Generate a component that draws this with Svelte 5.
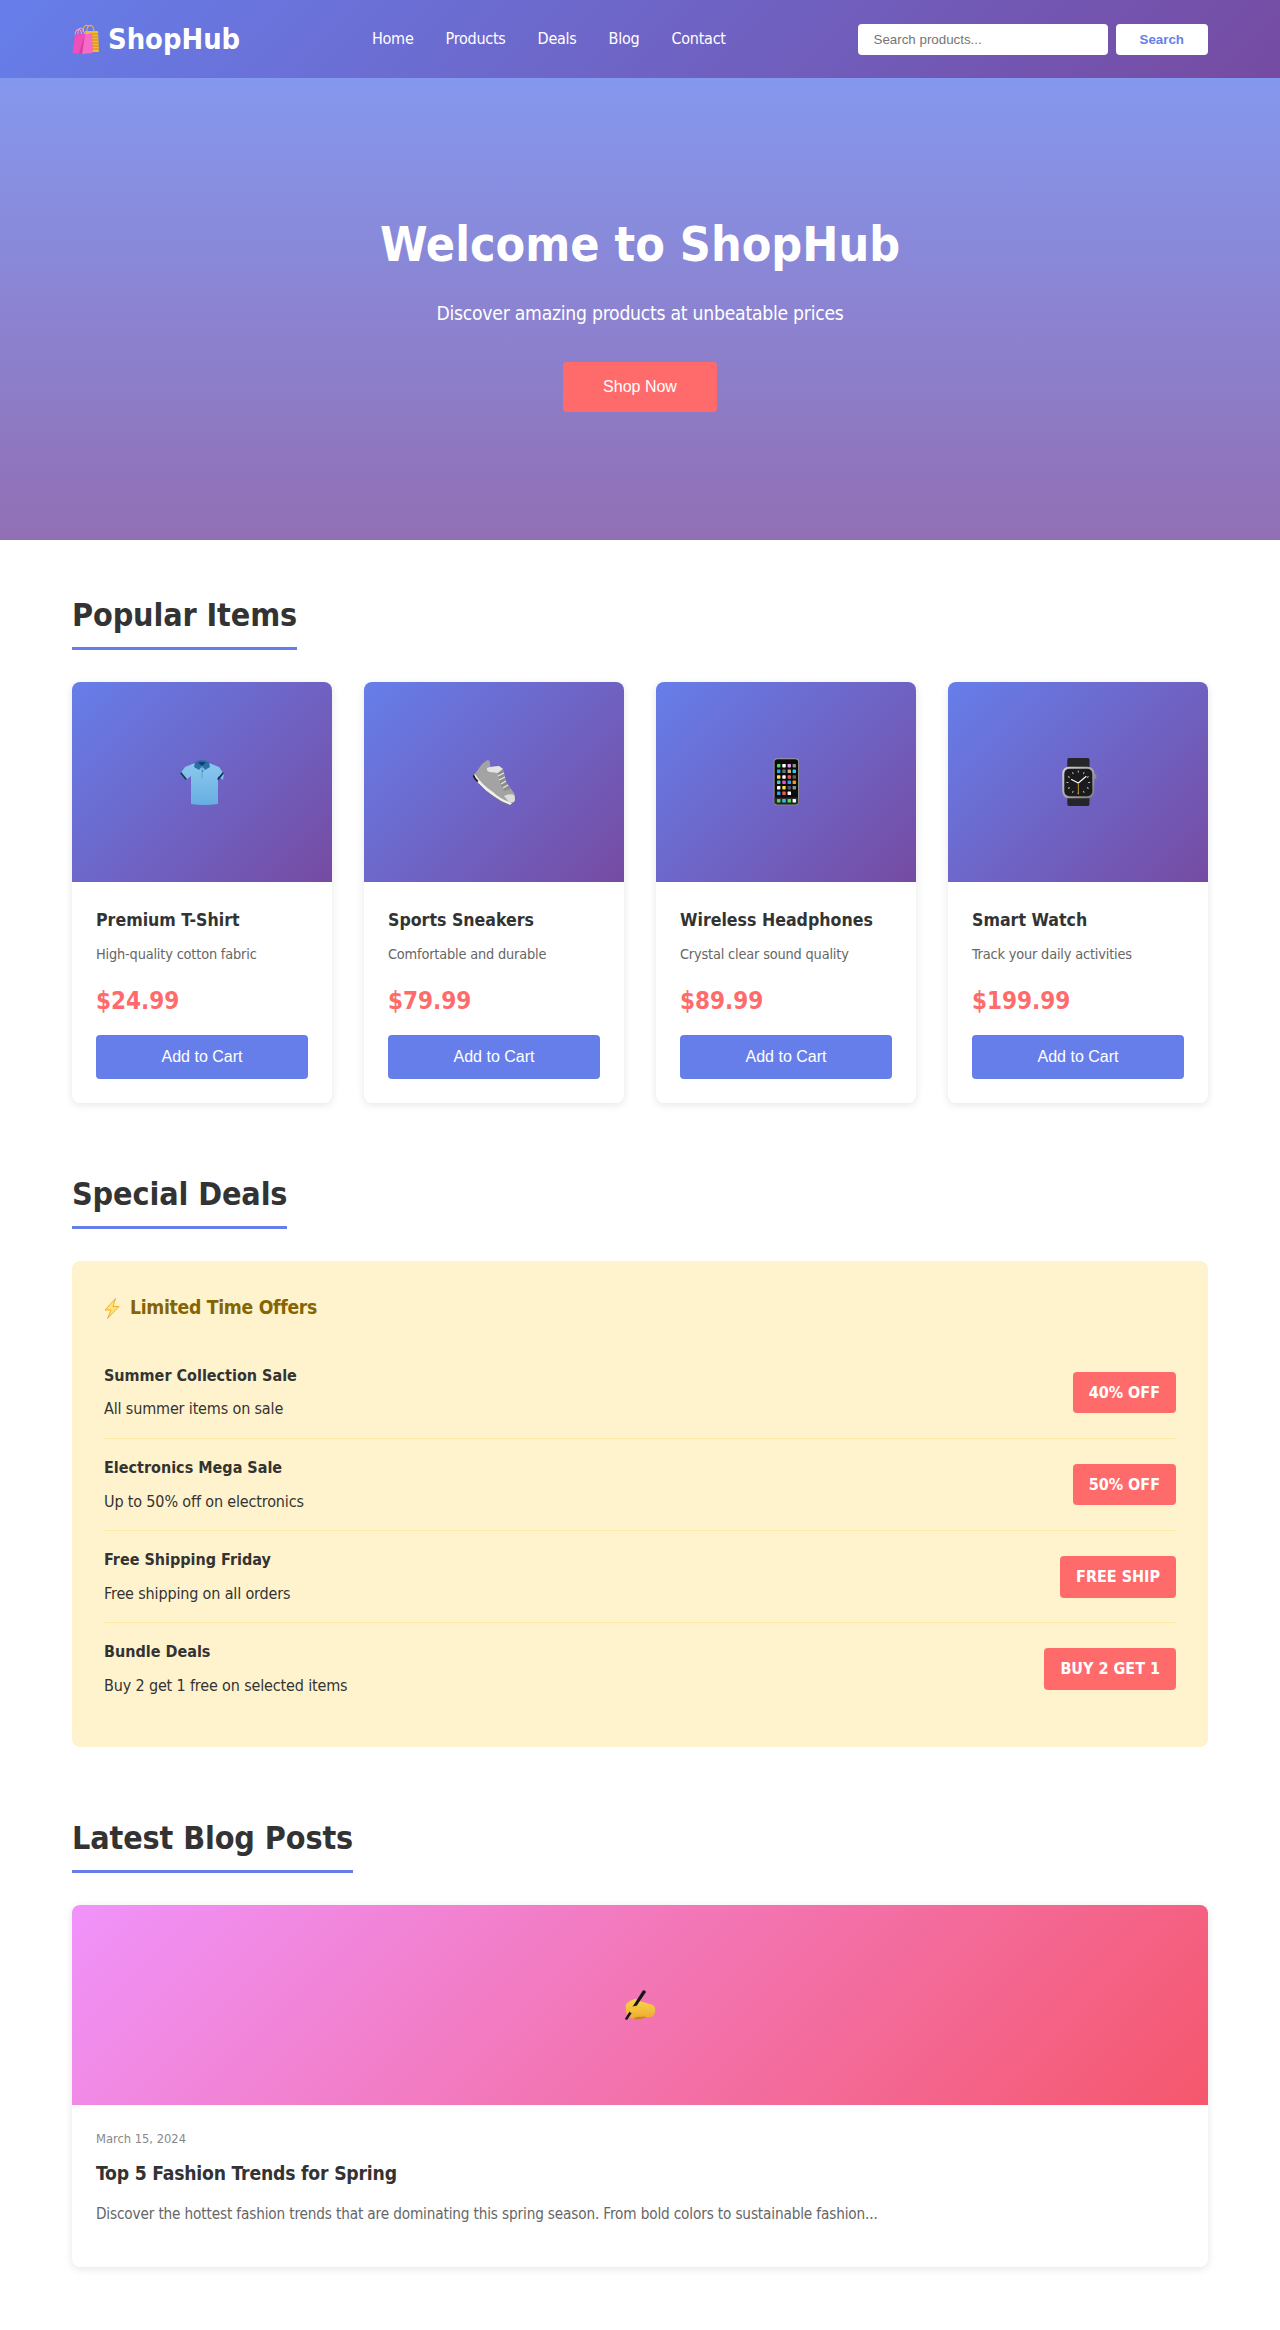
<script>
  const nav = ['Home', 'Products', 'Deals', 'Blog', 'Contact'];
  const products = [
    { icon: 'shirt', name: 'Premium T-Shirt', desc: 'High-quality cotton fabric', price: '$24.99' },
    { icon: 'shoe', name: 'Sports Sneakers', desc: 'Comfortable and durable', price: '$79.99' },
    { icon: 'phone', name: 'Wireless Headphones', desc: 'Crystal clear sound quality', price: '$89.99' },
    { icon: 'watch', name: 'Smart Watch', desc: 'Track your daily activities', price: '$199.99' }
  ];
  const deals = [
    { title: 'Summer Collection Sale', desc: 'All summer items on sale', badge: '40% OFF' },
    { title: 'Electronics Mega Sale', desc: 'Up to 50% off on electronics', badge: '50% OFF' },
    { title: 'Free Shipping Friday', desc: 'Free shipping on all orders', badge: 'FREE SHIP' },
    { title: 'Bundle Deals', desc: 'Buy 2 get 1 free on selected items', badge: 'BUY 2 GET 1' }
  ];
  const apps = [
    ['#4cd964', '#ffffff', '#e0a0e8', '#8e8e93'],
    ['#1ab2f0', '#6d6d72', '#c9b38c', '#35c8e8'],
    ['#ffe14d', '#ffffff', '#f0584f', '#5f5f63'],
    ['#35d0e0', '#e84fd0', '#1ea8f0', '#ff9500'],
    ['#ffffff', '#ffdc3c', '#55555a', '#8e8e93'],
    ['#1ea8f0', '#f0584f', '#ffffff', null]
  ];
  const dock = ['#4cd964', '#2fc4ee', '#4cd964', '#ffffff'];
  const colX = [16.7, 22, 27.3, 32.3];
  const rowY = [7.7, 13.3, 19, 24.3, 29.7, 35.3];
  const ticks = Array.from({ length: 12 }, (_, i) => i * 30);
</script>

<header class="header">
  <div class="header-inner">
    <div class="logo">
      <svg class="bag" viewBox="0 0 27 30" aria-hidden="true">
        <path d="M11 8 C11 1 15 0 17 3 M15 7 C15 0 21 -1 22 7" fill="none" stroke="#e0b04f" stroke-width="1.1"/>
        <path d="M6 10 C6 2 11 2 12.5 10 M3 11 C4 4 9 3 9.5 10" fill="none" stroke="#f2a0cc" stroke-width="1.1"/>
        <path d="M13 7 H26 L27 28 H17 Z" fill="#f0bb30"/>
        <path d="M17 10 H26 M17 13 H26 M17 16 H26.5 M17.5 19 H26.5 M18 22 H26.7 M18 25 H27" stroke="#c98a1e" stroke-width="1.1"/>
        <path d="M3 10 H20 L20.5 29 L10 30 L0.5 29 Z" fill="#ee4fb8"/>
        <path d="M13 10 L20 10 L20.5 29 L10 30 Z" fill="#f56cc8"/>
        <path d="M13 10 L10 30 L7 29 Z" fill="#d63ea6"/>
      </svg>
      <span>ShopHub</span>
    </div>
    <nav class="nav">
      {#each nav as item}
        <a href="#top">{item}</a>
      {/each}
    </nav>
    <div class="search">
      <input type="text" placeholder="Search products..." />
      <button>Search</button>
    </div>
  </div>
</header>

<section class="hero">
  <h1>Welcome to ShopHub</h1>
  <p>Discover amazing products at unbeatable prices</p>
  <button>Shop Now</button>
</section>

<main class="container">
  <section class="section">
    <h2>Popular Items</h2>
    <div class="grid">
      {#each products as p}
        <article class="card">
          <div class="thumb">
            <svg class="icon" viewBox="0 0 48 48" aria-hidden="true">
              {#if p.icon === 'shirt'}
                <defs>
                  <linearGradient id="polo" x1="0" y1="0" x2="0" y2="1">
                    <stop offset="0" stop-color="#8cc8ee"/>
                    <stop offset="1" stop-color="#66aee2"/>
                  </linearGradient>
                </defs>
                <path d="M17 5 L7 9 L2 16 L8 22 L13 18 L13 46 Q26 48 40 46 L40 18 L45 22 L46 16 L41 9 L31 5 L24 10 Z" fill="url(#polo)"/>
                <path d="M2 15.5 L7.5 22 L9 21 L3.2 14 Z M46 15.5 L40.5 22 L39 21 L44.8 14 Z" fill="#16355f"/>
                <path d="M17 4 Q24 0 31 4 L32 9 L27 12 L24 8 L21 12 L16 9 Z" fill="#2a6fa8"/>
                <path d="M20 4.5 Q24 3 28 4.5 L24 8 Z" fill="#123f70"/>
                <path d="M24 8 V20" stroke="#5d9fd0" stroke-width="1"/>
                <circle cx="24.7" cy="13" r="0.8" fill="#2a6fa8"/>
              {:else if p.icon === 'shoe'}
                <path d="M3 18 Q8 12 12 6 L18 1.5 Q21 4 20 9 L29 8 L33 11 L36 24 L44 35 Q46 40 44 44 L40 47 Q30 44 22 37 Q10 29 3 18 Z" fill="#a3a3a3"/>
                <path d="M20 9 L29 8 L33 11 L28 15 L20 14 Q16 13 17 10 Z" fill="#e4e4e4"/>
                <path d="M28 15 L33 11 L36 24 L41 31 L34 33 L30 25 Z" fill="#8d8d8d"/>
                <path d="M28 18 L34 15 M29 22 L35 19 M31 26 L36 23 M33 30 L38 27" stroke="#e8e8e8" stroke-width="1.3"/>
                <path d="M34 38 Q40 35 44 37 Q46 41 44 44 L39 44 Z" fill="#dcdcdc"/>
                <path d="M3 18 Q10 29 22 37 Q30 43 40 47 L42 45 Q30 41 23 34 Q11 26 5 16 Z" fill="#efefef"/>
                <path d="M2.7 18 Q4 21 7 24 L8.5 23 Q5 20 4 16.5 Z" fill="#161616"/>
                <path d="M9 26 Q16 34 24 39 Q32 45 40 47.3" fill="none" stroke="#777" stroke-width="0.9"/>
              {:else if p.icon === 'phone'}
                <rect x="11.7" y="0.3" width="25.3" height="47" rx="3.6" fill="#9a9a9a"/>
                <rect x="12.6" y="1.2" width="23.5" height="45.2" rx="2.8" fill="#0c0c0c"/>
                {#each apps as row, r}
                  {#each row as c, i}
                    {#if c}
                      <rect x={colX[i] - 1.7} y={rowY[r] - 1.7} width="3.4" height="3.4" rx="0.6" fill={c}/>
                    {/if}
                  {/each}
                {/each}
                <rect x="12.6" y="39.6" width="23.5" height="6.2" fill="#2a2a2a"/>
                {#each dock as c, i}
                  <rect x={colX[i] - 1.7} y="41" width="3.4" height="3.4" rx="0.6" fill={c}/>
                {/each}
              {:else}
                <defs>
                  <linearGradient id="case" x1="0" y1="0" x2="1" y2="1">
                    <stop offset="0" stop-color="#d4d4d4"/>
                    <stop offset="1" stop-color="#7a7a7a"/>
                  </linearGradient>
                </defs>
                <path d="M15 0 H34 Q35.5 0 35.5 2 V46 Q35.5 48 34 48 H15 Q13.3 48 13.3 46 V2 Q13.3 0 15 0 Z" fill="#26262a"/>
                <rect x="40" y="16" width="2.4" height="5" rx="1" fill="#8c8c8c"/>
                <rect x="8.3" y="8.7" width="32" height="31.6" rx="6.5" fill="url(#case)"/>
                <rect x="10.3" y="10.7" width="28" height="27.6" rx="5" fill="#1b1b1e"/>
                {#each ticks as a}
                  <rect x="23.8" y="12.6" width="1" height="2" fill="#b8b8b8" transform="rotate({a} 24.3 24.5)"/>
                {/each}
                <path d="M24.3 25 L17.5 21.5" stroke="#fff" stroke-width="1.1" stroke-linecap="round"/>
                <path d="M24.3 25 L32 18.5" stroke="#fff" stroke-width="1.1" stroke-linecap="round"/>
                <path d="M24.3 25 V35.5" stroke="#c9922e" stroke-width="1"/>
              {/if}
            </svg>
          </div>
          <div class="card-body">
            <h3>{p.name}</h3>
            <p class="desc">{p.desc}</p>
            <div class="price">{p.price}</div>
            <button>Add to Cart</button>
          </div>
        </article>
      {/each}
    </div>
  </section>

  <section class="section">
    <h2>Special Deals</h2>
    <div class="deals">
      <h3>
        <svg class="bolt" viewBox="0 0 16 21" aria-hidden="true">
          <path d="M11.5 0.5 L1 12 H7 L3.5 20.5 L15 8.5 H9 Z" fill="#ffe27a" stroke="#f5a623" stroke-width="0.9" stroke-linejoin="round"/>
        </svg>
        <span>Limited Time Offers</span>
      </h3>
      {#each deals as d}
        <div class="deal">
          <div>
            <h4>{d.title}</h4>
            <p>{d.desc}</p>
          </div>
          <span class="badge">{d.badge}</span>
        </div>
      {/each}
    </div>
  </section>

  <section class="section">
    <h2>Latest Blog Posts</h2>
    <article class="post">
      <div class="post-img">
        <svg class="hand" viewBox="0 0 32 32" aria-hidden="true">
          <defs>
            <linearGradient id="skin" x1="0" y1="0" x2="0" y2="1">
              <stop offset="0" stop-color="#fbd64e"/>
              <stop offset="1" stop-color="#eeaa2c"/>
            </linearGradient>
          </defs>
          <path d="M2 15 Q6 11 11 10 Q14 10 15 12 L19 13 L29 16 Q32 19 31 23 Q30 27 28 28 L20 28 Q16 30 12 30 Q7 30 4 28 Q1 23 2 15 Z" fill="url(#skin)"/>
          <path d="M9 30 Q13 27 16 28 Q20 27 22 28 L20 29 Q15 31 9 30 Z" fill="#c9821f"/>
          <path d="M19 1.2 Q21.5 1 22 3 L3 31 L0.8 30 Z" fill="#161616"/>
          <path d="M5 20 Q9 16 14 17 L15 20 Q11 21 8 24 Q5 24 5 20 Z" fill="#f6c23a"/>
        </svg>
      </div>
      <div class="post-body">
        <div class="date">March 15, 2024</div>
        <h3>Top 5 Fashion Trends for Spring</h3>
        <p>Discover the hottest fashion trends that are dominating this spring season. From bold colors to sustainable fashion...</p>
      </div>
    </article>
  </section>
</main>

<style>
  :global(*) { box-sizing: border-box; margin: 0; padding: 0; }
  :global(body) {
    font-family: 'DejaVu Sans Condensed', 'DejaVu Sans', sans-serif;
    line-height: 1.6;
    color: #333;
    background: #fff;
  }
  button, input { font-family: 'Liberation Sans', Arial, sans-serif; }
  .header {
    background: linear-gradient(135deg, #667eea 0%, #764ba2 100%);
    color: #fff;
    padding: 16px 0;
  }
  .header-inner {
    max-width: 1200px;
    margin: 0 auto;
    padding: 0 32px;
    display: flex;
    justify-content: space-between;
    align-items: center;
  }
  .logo {
    display: flex;
    align-items: center;
    gap: 9px;
    font-size: 28.8px;
    font-weight: 700;
  }
  .bag { width: 27px; height: 30px; }
  .nav { display: flex; gap: 32px; }
  .nav a { color: #fff; text-decoration: none; font-size: 16px; letter-spacing: -0.25px; }
  .search { display: flex; gap: 8px; }
  .search input {
    width: 250px;
    padding: 8px 16px;
    border: none;
    border-radius: 4px;
    font-size: 13.33px;
    background: #fff;
  }
  .search button {
    padding: 8px 24px;
    border: none;
    border-radius: 4px;
    background: #fff;
    color: #667eea;
    font-weight: 700;
    font-size: 13.33px;
  }
  .hero {
    background: linear-gradient(rgba(102,126,234,0.8), rgba(118,75,162,0.8));
    color: #fff;
    text-align: center;
    padding: 128px 32px;
  }
  .hero h1 { font-size: 48px; margin-bottom: 16px; }
  .hero p { font-size: 19.2px; letter-spacing: -0.25px; margin-bottom: 32px; }
  .hero button {
    background: #ff6b6b;
    color: #fff;
    border: none;
    border-radius: 4px;
    padding: 16px 40px;
    font-size: 16px;
  }
  .container {
    max-width: 1200px;
    margin: 0 auto;
    padding: 48px 32px;
  }
  .section { margin-bottom: 64px; }
  h2 {
    display: inline-block;
    font-size: 32px;
    letter-spacing: -0.12px;
    color: #333;
    border-bottom: 3px solid #667eea;
    padding-top: 2px;
    padding-bottom: 6px;
    margin-bottom: 32px;
  }
  .grid { display: grid; grid-template-columns: repeat(4, 1fr); gap: 32px; }
  .card {
    background: #fff;
    border-radius: 8px;
    overflow: hidden;
    box-shadow: 0 2px 8px rgba(0,0,0,0.1);
  }
  .thumb {
    height: 200px;
    background: linear-gradient(135deg, #667eea 0%, #764ba2 100%);
    display: flex;
    align-items: center;
    justify-content: center;
  }
  .icon { width: 48px; height: 48px; }
  .card-body { padding: 24px; }
  .card-body h3 { font-size: 17.6px; margin-bottom: 9.4px; }
  .desc { font-size: 14.4px; letter-spacing: -0.17px; color: #666; margin-bottom: 16px; }
  .price { font-size: 24px; font-weight: 700; color: #ff6b6b; margin-bottom: 14.6px; }
  .card-body button {
    width: 100%;
    padding: 12.8px;
    background: #667eea;
    color: #fff;
    border: none;
    border-radius: 4px;
    font-size: 16px;
  }
  .deals { background: #fff3cd; border-radius: 8px; padding: 32px; }
  .deals h3 {
    display: flex;
    align-items: center;
    gap: 10px;
    font-size: 19.2px;
    letter-spacing: -0.3px;
    color: #856404;
    margin-bottom: 23px;
  }
  .bolt { width: 16px; height: 21px; }
  .deal {
    display: flex;
    justify-content: space-between;
    align-items: center;
    padding: 16px 0;
    border-bottom: 1px solid #ffeaa7;
  }
  .deal:last-child { border-bottom: none; }
  .deal h4 { font-size: 16px; margin-bottom: 8px; }
  .deal p { font-size: 16px; letter-spacing: -0.15px; }
  .badge {
    background: #ff6b6b;
    color: #fff;
    font-weight: 700;
    padding: 8px 16px;
    border-radius: 4px;
  }
  .post {
    border-radius: 8px;
    overflow: hidden;
    background: #fff;
    box-shadow: 0 2px 8px rgba(0,0,0,0.1);
  }
  .post-img {
    height: 200px;
    background: linear-gradient(135deg, #f093fb 0%, #f5576c 100%);
    display: flex;
    align-items: center;
    justify-content: center;
  }
  .hand { width: 32px; height: 32px; }
  .post-body { padding: 24px; }
  .date { font-size: 12.8px; color: #888; margin-bottom: 9.6px; }
  .post-body h3 { font-size: 19.2px; letter-spacing: -0.2px; margin-bottom: 12.8px; }
  .post-body p { font-size: 15.2px; letter-spacing: -0.15px; color: #666; margin-bottom: 16px; }
</style>
